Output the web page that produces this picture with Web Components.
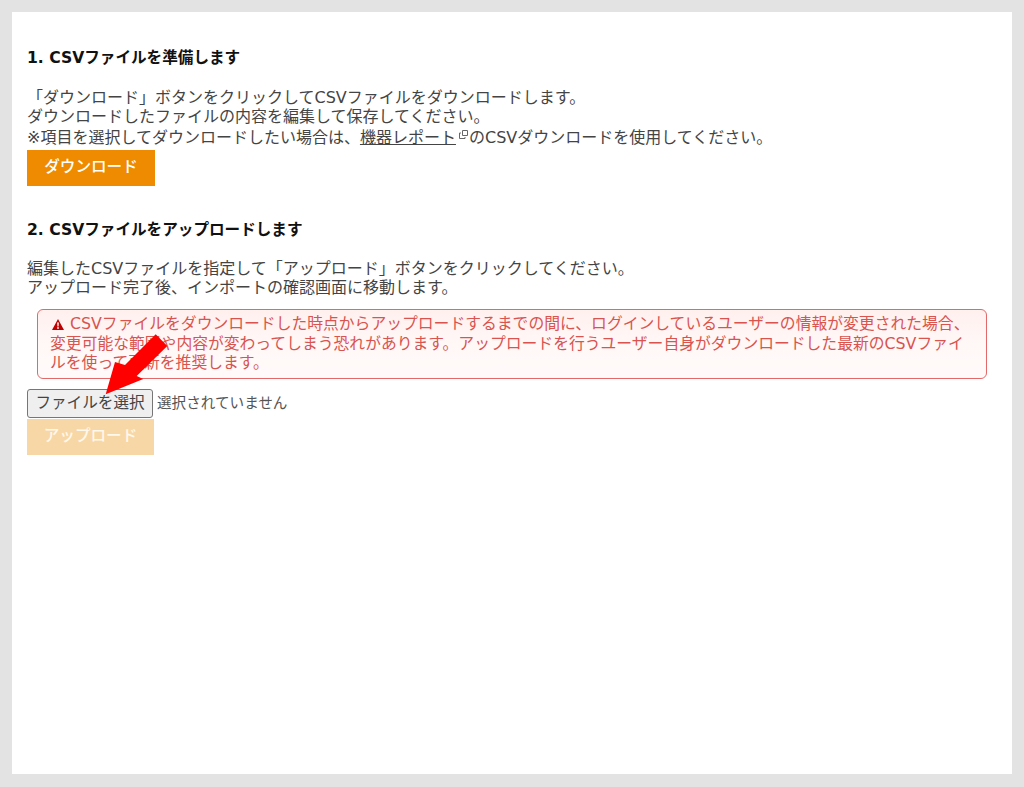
<!DOCTYPE html>
<html lang="ja"><head><meta charset="utf-8">
<style>
html,body{margin:0;padding:0;background:#fff}
body{font:16px/19px "DejaVu Sans","Noto Sans CJK JP",sans-serif;color:#444}
</style></head><body>
<x-frame>
  <x-step heading="1. CSVファイルを準備します">
    <div>「ダウンロード」ボタンをクリックしてCSVファイルをダウンロードします。</div>
    <div>ダウンロードしたファイルの内容を編集して保存してください。</div>
    <div style="line-height:24px;height:24px;white-space:nowrap">※項目を選択してダウンロードしたい場合は、<x-extlink>機器レポート</x-extlink>のCSVダウンロードを使用してください。</div>
    <x-action>ダウンロード</x-action>
  </x-step>
  <x-step heading="2. CSVファイルをアップロードします" style="margin-top:34px;--gap:19px">
    <div>編集したCSVファイルを指定して「アップロード」ボタンをクリックしてください。</div>
    <div>アップロード完了後、インポートの確認画面に移動します。</div>
    <x-alert>CSVファイルをダウンロードした時点からアップロードするまでの間に、ログインしているユーザーの情報が変更された場合、変更可能な範囲や内容が変わってしまう恐れがあります。アップロードを行うユーザー自身がダウンロードした最新のCSVファイルを使って更新を推奨します。</x-alert>
    <x-file></x-file>
    <x-action disabled>アップロード</x-action>
    <x-arrow></x-arrow>
  </x-step>
</x-frame>
<script>
function def(name,html,setup){
  customElements.define(name,class extends HTMLElement{
    connectedCallback(){
      if(this.shadowRoot)return;
      const r=this.attachShadow({mode:'open'});
      r.innerHTML=html;
      if(setup)setup(this,r);
    }
  });
}
def('x-frame',`<style>:host{display:block;box-sizing:border-box;width:1024px;height:787px;border:12px solid #e3e3e3;border-bottom-width:13px;padding:36px 15px 0;background:#fff;position:relative}</style><slot></slot>`);
def('x-step',`<style>:host{display:block;position:relative}
h2{margin:0 0 var(--gap,20px);font-size:15.6px;line-height:20px;font-weight:700;color:#111}</style><h2></h2><slot></slot>`,(h,r)=>{r.querySelector('h2').textContent=h.getAttribute('heading')});
def('x-extlink',`<style>:host{display:inline}
a{color:inherit;text-decoration:underline;text-underline-offset:1px}
svg{display:inline-block;width:9px;height:9px;margin:0 1px 0 3px;vertical-align:4px}</style><a href="#"><slot></slot></a><svg viewBox="0 0 9 9" fill="none" stroke="#666" stroke-width="1"><path d="M3.500 .5h5v5h-5z"/><path d="M2 3H.5v5.500H6V7"/></svg>`);
def('x-action',`<style>:host{display:flex;align-items:center;justify-content:center;box-sizing:border-box;width:128px;height:36px;background:#ee8b00;color:#fff;font-weight:500;font-size:15.6px;padding-bottom:2px}
:host([disabled]){background:#f8d7a6;color:#fff8ec;width:127px}</style><slot></slot>`);
def('x-alert',`<style>:host{display:block;box-sizing:border-box;margin:12px 10px 10px 10px;height:70px;border:1px solid #e2686a;border-radius:6px;background:linear-gradient(#fff0ee,#fff8f7 50%,#fffafa);color:#d9534f;padding:4px 12px;font-size:15.8px;line-height:19.5px}
svg{width:12px;height:11px;margin:0 6px 0 2px;vertical-align:-0.5px}</style><svg viewBox="0 0 12 11"><path fill="#c00000" fill-rule="evenodd" d="M6 0 12 11H0ZM5.100 3.500l.3 4h1.200l.3-4ZM5.100 8.200v1.500h1.800V8.200Z"/></svg><slot></slot>`);
def('x-file',`<style>:host{display:flex;align-items:flex-start;gap:4px;height:30px;white-space:nowrap;font-size:15.6px}
span{font-size:14.6px;line-height:27px;color:#555}
button{box-sizing:border-box;width:126px;height:29px;margin:0;padding:0;background:#efefef;border:1px solid #767676;border-radius:3px;color:#444;font:inherit;white-space:nowrap}</style><button type="button">ファイルを選択</button><span>選択されていません</span>`);
def('x-arrow',`<style>:host{position:absolute;left:0;top:0;width:0;height:0;display:block}
svg{position:absolute;left:0;top:0;overflow:visible}</style><svg width="150" height="180" viewBox="0 0 150 180"><polygon fill="#f00" points="78.700,174.300 88,142 98,145 128.700,114.300 140.300,126 109.700,156 116.300,159"/></svg>`);
</script>
</body></html>
